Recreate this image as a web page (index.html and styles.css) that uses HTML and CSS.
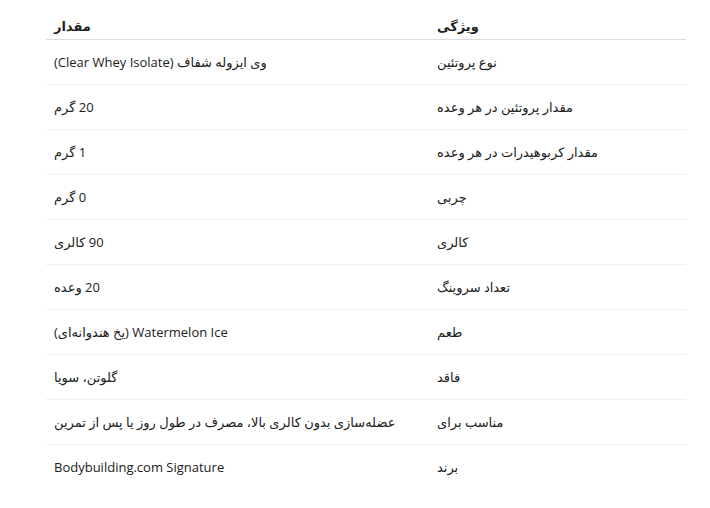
FILE: index.html
```html
<!DOCTYPE html>
<html lang="fa" dir="rtl">
<head>
<meta charset="utf-8">
<link rel="stylesheet" href="styles.css">
</head>
<body>
<div class="wrap">
<table class="spec">
<thead>
<tr><th class="c1">ویژگی</th><th class="c2">مقدار</th></tr>
</thead>
<tbody>
<tr><td>نوع پروتئین</td><td>وی ایزوله شفاف (Clear Whey Isolate)</td></tr>
<tr><td>مقدار پروتئین در هر وعده</td><td>20 گرم</td></tr>
<tr><td>مقدار کربوهیدرات در هر وعده</td><td>1 گرم</td></tr>
<tr><td>چربی</td><td>0 گرم</td></tr>
<tr><td>کالری</td><td>90 کالری</td></tr>
<tr><td>تعداد سروینگ</td><td>20 وعده</td></tr>
<tr><td>طعم</td><td>Watermelon Ice (یخ هندوانه‌ای)</td></tr>
<tr><td>فاقد</td><td>گلوتن، سویا</td></tr>
<tr><td>مناسب برای</td><td>عضله‌سازی بدون کالری بالا، مصرف در طول روز یا پس از تمرین</td></tr>
<tr><td>برند</td><td>Bodybuilding.com Signature</td></tr>
</tbody>
</table>
</div>
</body>
</html>
```
FILE: styles.css
```css
html, body {
  margin: 0;
  padding: 0;
  background: #ffffff;
}
body {
  font-family: "Open Sans", "DejaVu Sans", sans-serif;
  font-size: 13px;
  color: #212121;
}
.wrap {
  padding: 8px 24px 0 46px;
}
.spec {
  width: 640px;
  border-collapse: collapse;
  table-layout: fixed;
}
.spec th, .spec td {
  text-align: left;
  line-height: 20px;
  padding: 12px 8px;
  vertical-align: middle;
}
.spec th {
  font-weight: bold;
  padding: 8px 8px 3px;
  border-bottom: 1px solid #dcdcdc;
}
.spec .c1 { width: 241px; }
.spec .c2 { width: 367px; }
.spec tbody tr + tr td {
  border-top: 1px solid #efefef;
}
```
